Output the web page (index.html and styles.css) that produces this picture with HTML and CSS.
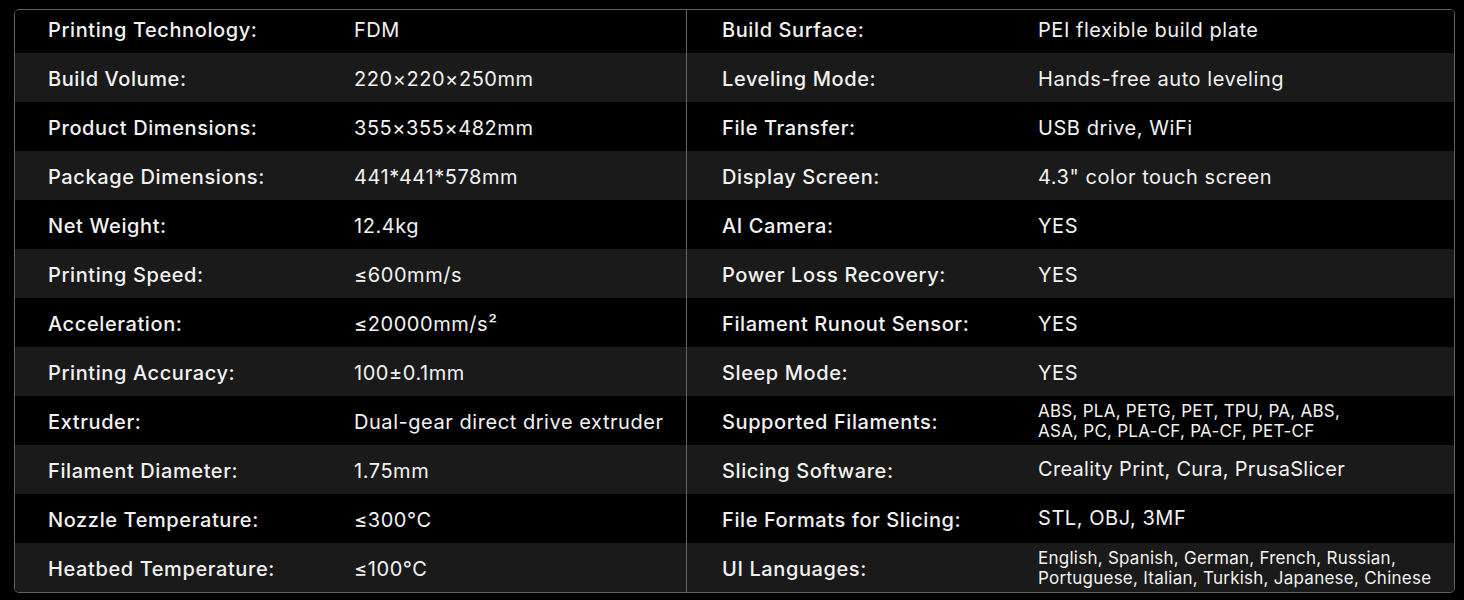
FILE: index.html
```html
<!DOCTYPE html>
<html lang="en">
<head>
<meta charset="utf-8">
<title>Specifications</title>
<link rel="stylesheet" href="styles.css">
</head>
<body>
<div class="specs">
  <div class="row first">
    <div class="label">Printing Technology:</div><div class="value">FDM</div>
    <div class="label right">Build Surface:</div><div class="value">PEI flexible build plate</div>
  </div>
  <div class="row alt">
    <div class="label">Build Volume:</div><div class="value">220×220×250mm</div>
    <div class="label right">Leveling Mode:</div><div class="value">Hands-free auto leveling</div>
  </div>
  <div class="row">
    <div class="label">Product Dimensions:</div><div class="value">355×355×482mm</div>
    <div class="label right">File Transfer:</div><div class="value">USB drive, WiFi</div>
  </div>
  <div class="row alt">
    <div class="label">Package Dimensions:</div><div class="value">441*441*578mm</div>
    <div class="label right">Display Screen:</div><div class="value">4.3" color touch screen</div>
  </div>
  <div class="row">
    <div class="label">Net Weight:</div><div class="value">12.4kg</div>
    <div class="label right">AI Camera:</div><div class="value">YES</div>
  </div>
  <div class="row alt">
    <div class="label">Printing Speed:</div><div class="value">≤600mm/s</div>
    <div class="label right">Power Loss Recovery:</div><div class="value">YES</div>
  </div>
  <div class="row">
    <div class="label">Acceleration:</div><div class="value">≤20000mm/s²</div>
    <div class="label right">Filament Runout Sensor:</div><div class="value">YES</div>
  </div>
  <div class="row alt">
    <div class="label">Printing Accuracy:</div><div class="value">100±0.1mm</div>
    <div class="label right">Sleep Mode:</div><div class="value">YES</div>
  </div>
  <div class="row">
    <div class="label">Extruder:</div><div class="value">Dual-gear direct drive extruder</div>
    <div class="label right">Supported Filaments:</div><div class="value small">ABS, PLA, PETG, PET, TPU, PA, ABS,<br>ASA, PC, PLA-CF, PA-CF, PET-CF</div>
  </div>
  <div class="row alt">
    <div class="label">Filament Diameter:</div><div class="value">1.75mm</div>
    <div class="label right">Slicing Software:</div><div class="value raised tight">Creality Print, Cura, PrusaSlicer</div>
  </div>
  <div class="row">
    <div class="label">Nozzle Temperature:</div><div class="value">≤300°C</div>
    <div class="label right">File Formats for Slicing:</div><div class="value raised">STL, OBJ, 3MF</div>
  </div>
  <div class="row alt last">
    <div class="label">Heatbed Temperature:</div><div class="value">≤100°C</div>
    <div class="label right">UI Languages:</div><div class="value small">English, Spanish, German, French, Russian,<br>Portuguese, Italian, Turkish, Japanese, Chinese</div>
  </div>
</div>
</body>
</html>
```

FILE: styles.css
```css
html, body {
  margin: 0;
  padding: 0;
  background: #000;
}

body {
  font-family: Inter, "Liberation Sans", sans-serif;
  color: #f2f2f2;
  padding: 9px 0 0 14px;
}

.specs {
  width: 1441px;
  box-sizing: border-box;
  border: 1px solid #626262;
  border-radius: 5px;
  overflow: hidden;
  display: flex;
  flex-direction: column;
}

.row {
  display: grid;
  grid-template-columns: 339px 332px 352px 1fr;
  height: 49px;
  box-sizing: border-box;
  align-items: center;
  padding-top: 3px;
  padding-bottom: 1px;
  background: #000;
}

.row.first {
  height: 43px;
  padding-top: 0;
  padding-bottom: 3px;
}

.row.alt {
  background: #1a1a1a;
}

.label {
  font-size: 20px;
  font-weight: 500;
  letter-spacing: 0.6px;
  padding-left: 33px;
  white-space: nowrap;
  line-height: 24px;
}

.label.right {
  align-self: stretch;
  display: flex;
  align-items: center;
  border-left: 1px solid #626262;
  padding-left: 35px;
  margin-top: -3px;
  padding-top: 3px;
  margin-bottom: -1px;
  padding-bottom: 1px;
}

.row.first .label.right {
  margin-top: 0;
  padding-top: 0;
  margin-bottom: -3px;
  padding-bottom: 3px;
}

.value {
  font-size: 20px;
  font-weight: 400;
  letter-spacing: 0.55px;
  white-space: nowrap;
  line-height: 24px;
}

.value.small {
  font-size: 17px;
  letter-spacing: 0.25px;
  line-height: 20px;
  margin-top: -1px;
}

.value.raised {
  margin-top: -4px;
}

.value.tight {
  letter-spacing: 0.3px;
}
```
